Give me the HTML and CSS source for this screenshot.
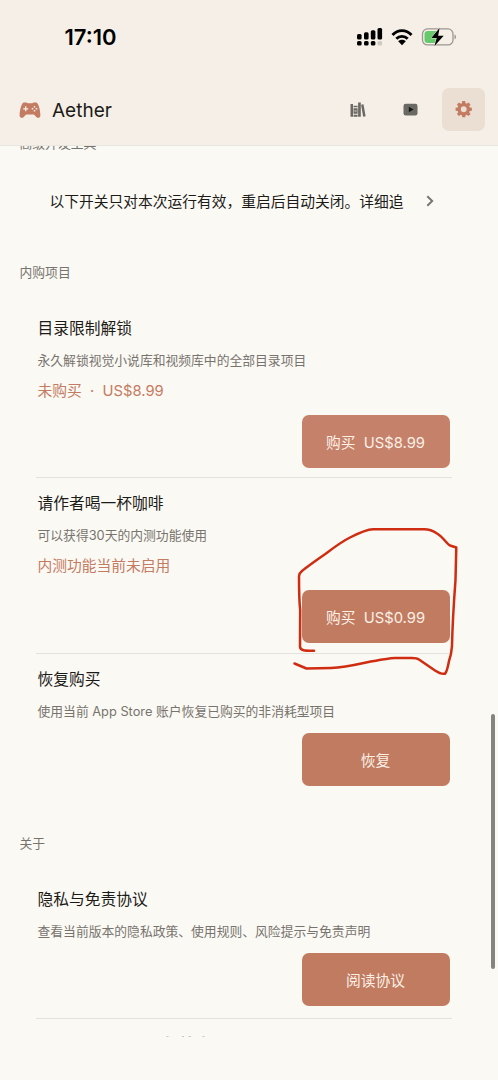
FILE: index.html
```html
<!DOCTYPE html>
<html lang="zh-CN">
<head>
<meta charset="utf-8">
<meta name="viewport" content="width=device-width, initial-scale=1">
<title>Aether</title>
<link rel="stylesheet" href="styles.css">
</head>
<body>
<div class="screen">
  <header class="header">
    <div class="status-bar">
      <time class="clock">17:10</time>
      <div class="indicators">
        <svg class="signal" width="26" height="18" viewBox="0 0 26 18">
          <rect x="0" y="6" width="4.6" height="5.6" rx="1.5"/><rect x="7" y="4.3" width="4.6" height="7.3" rx="1.5"/><rect x="13.8" y="2.2" width="4.6" height="9.4" rx="1.5"/><rect x="20.5" y="0" width="4.6" height="11.6" rx="1.5"/>
          <rect x="0" y="13" width="4.6" height="4.6" rx="1.5"/><rect x="7" y="13" width="4.6" height="4.6" rx="1.5"/><rect x="13.8" y="13" width="4.6" height="4.6" rx="1.5"/><rect class="faint" x="20.5" y="13" width="4.6" height="4.6" rx="1.5"/>
        </svg>
        <svg class="wifi" width="22" height="17" viewBox="0 0 22 17">
          <path class="arc" d="M1.500 6C6.800 .2 15.200.2 20.500 6M5.300 9.700c3.100-3.200 8.300-3.200 11.400 0"/><path d="M7.200 12.200c2-2 5.600-2 7.600 0L11 16.200z"/>
        </svg>
        <svg class="battery" width="36" height="20" viewBox="0 0 36 20">
          <rect class="shell" x="1.500" y="1.900" width="30.500" height="16" rx="5"/>
          <rect class="charge" x="3.500" y="3.900" width="14" height="12" rx="3.200"/>
          <path class="nub" d="M33.500 7.500c2 .6 2 4.200 0 4.800z"/>
          <path class="bolt" d="M18.700.8 10.300 11h5.400l-2.400 8.200L22.700 8.800h-5.600z"/>
        </svg>
      </div>
    </div>
    <div class="app-bar">
      <div class="brand">
        <svg class="gamepad" width="22" height="17" viewBox="0 0 22 17">
          <path d="M5 .5h2.200c.9 0 1.200.8 2 .8h3.600c.8 0 1.100-.8 2-.8H17c2.700 0 4.300 8.500 4.400 12.500.1 3-2.600 3.600-4.100 2l-2.400-2.600H7.100L4.700 15c-1.500 1.600-4.200 1-4.100-2C.7 9 2.300.5 5 .5z"/>
          <path class="cut" d="M6.700 4.300v5M4.200 6.800h5"/>
          <path class="dots" d="M15.500 4v1.600M15.500 8v1.600M12.700 6.800h1.600M16.700 6.800h1.600"/>
        </svg>
        <span class="name">Aether</span>
      </div>
      <nav class="tabs">
        <a class="tab"><svg width="16" height="16" viewBox="0 0 16 16">
          <path class="ink" d="M.5 2h2.500v12.800H.5zM3.500 3.800h4.100v1.500H3.500zM3.500 6.200h4.100v5.500H3.500zM3.500 12.700h4.100v2.100H3.500zM8.100.5h2.700v14.300H8.100zM11.100 2.700l2.400-.4 2.100 12-2.500.5z"/>
          <path class="slot" d="M5.500 8v2"/></svg></a>
        <a class="tab"><svg width="16" height="16" viewBox="0 0 16 16">
          <rect class="ink" x=".5" y="1.800" width="14" height="11.600" rx="2.200"/><path class="play" d="M5.800 4.700v5.600l4.800-2.800z"/></svg></a>
        <a class="tab active"><svg width="18" height="18" viewBox="0 0 18 18">
          <path class="gear" transform="translate(0 -.9) scale(.97)" fill-rule="evenodd" d="M7.500 1h3l.4 2.200 1.100.5 1.900-1.300 2.100 2.100-1.300 1.900.5 1.100 2.200.4v3l-2.200.4-.5 1.100 1.300 1.900-2.100 2.100-1.900-1.300-1.100.5-.4 2.200h-3l-.4-2.200-1.100-.5-1.900 1.300L2 14.300l1.300-1.900-.5-1.100L.6 10.900v-3l2.200-.4.5-1.100L2 4.500l2.100-2.100L6 3.700l1.100-.5zM9 6.400a3 3 0 1 0 0 6A3 3 0 1 0 9 6.400z"/></svg></a>
      </nav>
    </div>
  </header>

  <main class="content">
    <h2 class="section-title clipped">高级开发工具</h2>
    <div class="disclosure">
      <span>以下开关只对本次运行有效，重启后自动关闭。详细追</span>
      <svg width="8" height="12" viewBox="0 0 8 12"><path d="M1.300 1.300 6.200 6l-4.900 4.700"/></svg>
    </div>

    <h2 class="section-title purchases">内购项目</h2>
    <section class="item">
      <h3>目录限制解锁</h3>
      <p class="desc">永久解锁视觉小说库和视频库中的全部目录项目</p>
      <p class="state">未购买&nbsp; ·&nbsp; US$8.99</p>
      <button class="action pale">购买&nbsp; US$8.99</button>
    </section>
    <section class="item">
      <h3>请作者喝一杯咖啡</h3>
      <p class="desc">可以获得30天的内测功能使用</p>
      <p class="state">内测功能当前未启用</p>
      <button class="action">购买&nbsp; US$0.99</button>
    </section>
    <section class="item short last">
      <h3>恢复购买</h3>
      <p class="desc">使用当前 App Store 账户恢复已购买的非消耗型项目</p>
      <button class="action">恢复</button>
    </section>

    <h2 class="section-title about">关于</h2>
    <section class="item short">
      <h3>隐私与免责协议</h3>
      <p class="desc">查看当前版本的隐私政策、使用规则、风险提示与免责声明</p>
      <button class="action">阅读协议</button>
    </section>
    <svg class="next-row" width="60" height="2" viewBox="0 0 60 2"><path d="M15.500.5h2M31 .5h2M37.500.5h2.500M51.500.5h2"/></svg>
  </main>
  <div class="scrollbar"></div>
  <svg class="markup" width="180" height="160" viewBox="285 520 180 160">
    <path d="M314 650.700C306 650.700 300 651 300 646.500L300.200 610Q299 600 299 576Q299 573.500 302 571Q308 566 326 553.500Q341 542 350 537.500Q366 529.500 373 529.300L424 529.300Q431 529.300 437 533.500C443 537 447 544 450 545.500L456.300 547.500L455.500 580Q452.500 620 452 646Q451.500 654 449 661Q447 672 445 673.700Q441 674.500 435 670.500L419 659.500Q417 658 412 658L395 658Q389 658 365 662.700Q343 667.500 331 668L306.500 668.500L294.500 663.500"/>
  </svg>
</div>
</body>
</html>
```

FILE: styles.css
```css
* { box-sizing: border-box; }
body { margin: 0; background: #fbf9f4; }
h2, h3, p { margin: 0; font-weight: 400; }
svg { display: block; flex: none; }

.screen {
  position: relative;
  width: 498px;
  height: 1080px;
  overflow: hidden;
  display: flex;
  flex-direction: column;
  background: #fbf9f4;
  color: #1c1b18;
  font-family: Inter, "Noto Sans CJK SC", sans-serif;
}

.header {
  flex: none;
  height: 146px;
  background: #f6efe7;
  border-bottom: 1px solid #e9e5df;
}
.status-bar {
  height: 74px;
  padding: 0 41px 0 64.5px;
  display: flex;
  align-items: center;
  justify-content: space-between;
  color: #000;
}
.clock { font-size: 22px; line-height: 26px; font-weight: 600; letter-spacing: 0; }
.indicators { display: flex; align-items: center; gap: 8px; }
.signal .faint { fill: #cfc9c2; }
.wifi .arc { fill: none; stroke: #000; stroke-width: 2.8; }
.battery .shell { fill: none; stroke: #9b9791; stroke-width: 1.3; }
.battery .charge { fill: #66ca6c; }
.battery .nub { fill: #9b9791; }
.battery .bolt { fill: #000; stroke: #f6efe7; stroke-width: 1; paint-order: stroke; }

.app-bar {
  height: 71px;
  padding: 0 13px 0 19px;
  display: flex;
  align-items: center;
  justify-content: space-between;
}
.brand { display: flex; align-items: center; gap: 11px; padding-top: 2px; }
.name { font-size: 19px; line-height: 28px; }
.gamepad { fill: #c37b62; }
.gamepad .cut { stroke: #f6efe7; stroke-width: 1.3; }
.gamepad .dots { stroke: #f6efe7; stroke-width: 1.5; }
.tabs { display: flex; gap: 10px; }
.tab {
  width: 43px;
  height: 43px;
  border-radius: 7px;
  display: grid;
  place-items: center;
}
.tab.active { background: #eadfd2; }
.ink { fill: #6b6963; }
.slot { stroke: #aaa59e; stroke-width: 2; }
.play { fill: #171614; }
.gear { fill: #c37b62; }

.content {
  flex: none;
  height: 892px;
  overflow: hidden;
  padding: 0 46px 0 19.5px;
  display: flex;
  flex-direction: column;
}
.section-title { flex: none; font-size: 12.8px; line-height: 20px; color: #77746e; }
.section-title.clipped { margin-top: -12px; }
.section-title.purchases { margin-top: 51px; }
.section-title.about { margin-top: 38px; }
.disclosure {
  height: 24px;
  margin-top: 36px;
  padding: 0 18px 0 30px;
  display: flex;
  align-items: center;
  justify-content: space-between;
  font-size: 14.75px;
  white-space: nowrap;
}
.disclosure path { fill: none; stroke: #77746e; stroke-width: 1.9; }

.item {
  flex: none;
  height: 175.5px;
  margin-left: 16.5px;
  padding: 13px 2px 0 1.5px;
  display: flex;
  flex-direction: column;
  border-bottom: 1px solid #e4e2dc;
}
.section-title + .item { margin-top: 20px; }
.item.short { height: 142px; }
.section-title + .item.short { height: 145.5px; }
.item.last { border-bottom: 0; }
.item h3 { font-size: 15.75px; line-height: 26px; }
.desc { margin-top: 9px; font-size: 12.8px; line-height: 20px; color: #77746e; white-space: nowrap; }
.state { margin-top: 9px; font-size: 14.75px; line-height: 22px; color: #c37b62; }
.action {
  width: 148px;
  height: 53px;
  margin-top: 13px;
  align-self: flex-end;
  flex: none;
  padding: 0 1px 0 0;
  border: 0;
  border-radius: 7px;
  background: #c07b61;
  color: #fbf0e6;
  font: inherit;
  font-size: 14.75px;
}
.action.pale { background: #c5816a; }
.short .action { margin-top: 11.5px; }

.next-row { margin: 17px 0 0 131.5px; }
.next-row path { stroke: #c9c6c0; }
.scrollbar {
  position: absolute;
  left: 491px;
  top: 714px;
  width: 4px;
  height: 255px;
  border-radius: 2px;
  background: #858580;
}
.markup { position: absolute; left: 285px; top: 520px; pointer-events: none; }
.markup path { fill: none; stroke: #cf2c11; stroke-width: 2.5; stroke-linecap: round; stroke-linejoin: round; }
```
